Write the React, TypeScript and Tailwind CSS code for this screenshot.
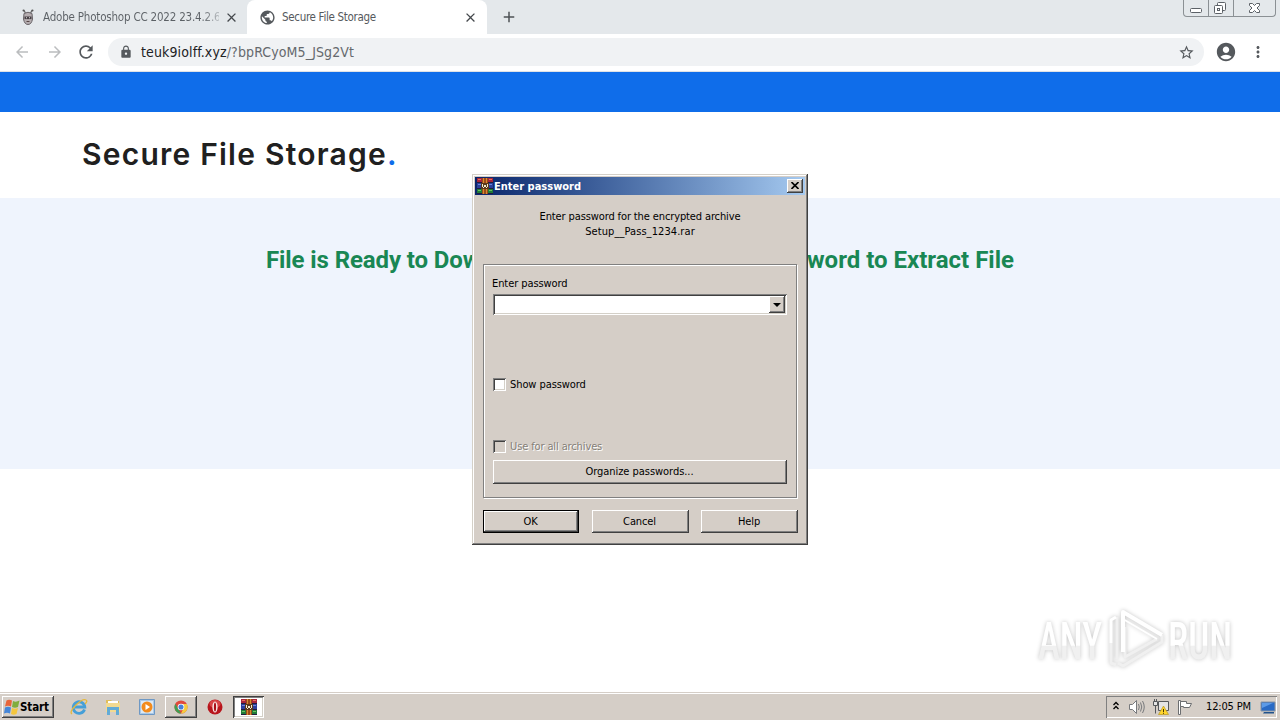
import React from "react";
import {
  MdAccountCircle,
  MdAdd,
  MdArrowBack,
  MdArrowForward,
  MdClose,
  MdLock,
  MdMoreVert,
  MdPublic,
  MdRefresh,
  MdStarBorder,
} from "react-icons/md";

interface ClassicButtonProps {
  label: string;
  className: string;
  isDefault?: boolean;
}

const ClassicButton: React.FC<ClassicButtonProps> = ({ label, className, isDefault }) => {
  return (
    <button
      className={`flex items-center justify-center pt-px pr-px ${className} ${
        isDefault
          ? "border border-black shadow-[inset_-1px_-1px_#404040,inset_1px_1px_#fff,inset_-2px_-2px_#808080]"
          : "shadow-[inset_-1px_-1px_#404040,inset_1px_1px_#fff,inset_-2px_-2px_#808080]"
      }`}
    >
      {label}
    </button>
  );
};

const RarIcon: React.FC<{ className: string }> = ({ className }) => (
  <svg viewBox="0 0 16 16" className={className} shapeRendering="crispEdges">
    <path d="M0 0h16v5H0z" fill="#a8243a" />
    <path d="M0 5h16v6H0z" fill="#2c3f9a" />
    <path d="M0 11h16v5H0z" fill="#1f7a38" />
    <path d="M1 1h3v1H1zM12 1h3v1h-3z" fill="#e8705c" />
    <path d="M1 6h3v1H1zM12 6h3v1h-3z" fill="#6a86dc" />
    <path d="M1 12h3v1H1zM12 12h3v1h-3z" fill="#6cc35e" />
    <path d="M0 4h16v1H0zM0 10h16v1H0zM0 15h16v1H0z" fill="#221c3c" />
    <path d="M5 0h6v16H5z" fill="#9a4a18" />
    <path d="M6 0h1v16H6zM9 0h1v16H9z" fill="#d88a30" />
    <path d="M4 5h8v6H4z" fill="#5a3a1c" />
    <path d="M5 6h1v3H5zM10 6h1v3h-1zM6 9h1v1H6zM9 9h1v1H9zM7 7h2v2H7z" fill="#f3ead0" />
  </svg>
);

const ChromeTabs = () => (
  <div className="flex h-[34px] bg-[#e4e8eb]">
    <div className="flex w-[247px] items-center pl-5">
      <svg viewBox="0 0 16 16" className="h-4 w-4">
        <path d="M4 1.5 5.5 4M12 1.5 10.5 4" stroke="#666" strokeWidth="1.3" />
        <circle cx="3.6" cy="1.5" r="1.1" fill="#555" />
        <circle cx="12.4" cy="1.5" r="1.1" fill="#555" />
        <path d="M4 4.5Q8 2 12 4.5L12.5 10Q11.5 15.5 8 15.5T3.5 10z" fill="#b5adb0" stroke="#686367" />
        <path d="M4.5 7.5h7v2.6h-7z" fill="#463f44" />
        <path d="M6 8.3h1v1H6zM9 8.3h1v1H9z" fill="#ddd" />
        <path d="M6.5 12.5h3" stroke="#544" />
      </svg>
      <span className="ml-[7px] w-[176px] bg-linear-to-r from-[#5b6065] from-[90%] to-[#e4e8eb] to-[104%] bg-clip-text pt-[2px] text-[11.5px] tracking-[-0.2px] whitespace-nowrap text-transparent">
        Adobe Photoshop CC 2022 23.4.2.6
      </span>
      <MdClose className="ml-[5px] h-[15px] w-[15px] text-[#44484c]" />
    </div>
    <div className="flex w-[240px] items-center rounded-t-lg bg-white pl-3">
      <MdPublic className="h-[17px] w-[17px] text-[#55595d]" />
      <span className="ml-[6px] w-[170px] pt-[2px] text-[11.5px] tracking-[-0.32px] whitespace-nowrap text-[#55595d]">
        Secure File Storage
      </span>
      <MdClose className="ml-[11px] h-[15px] w-[15px] text-[#44484c]" />
    </div>
    <div className="flex items-center pl-[13px]">
      <MdAdd className="h-[18px] w-[18px] text-[#4d5155]" />
    </div>
    {/* Window controls */}
    <div className="mr-[4px] ml-auto flex h-[17px] w-[93px] rounded-b border border-t-0 border-[#8b9094]">
      <svg viewBox="0 0 91 16" className="h-4 w-[91px]" fill="none" stroke="#5c6167">
        <path d="M24.5 0v16M49.5 0v16" stroke="#8b9094" />
        <rect x="6.500" y="8.500" width="11" height="4" rx="1" fill="#fff" />
        <rect x="33.500" y="2.500" width="8" height="8" rx="1" fill="#fff" />
        <rect x="30.500" y="5.500" width="8" height="8" rx="1" fill="#fff" />
        <rect x="33.500" y="8.500" width="2" height="2" />
        <path
          d="M65.500 3.500h3l2 2 2-2h3v2l-2.500 2.500 2.500 2.500v2h-3l-2-2-2 2h-3v-2l2.500-2.500-2.500-2.500z"
          fill="#fff"
        />
      </svg>
    </div>
  </div>
);

const ChromeToolbar = () => (
  <div className="flex h-[38px] items-center border-b border-[#dfe2e6] bg-white pb-px text-[#55595d]">
    <MdArrowBack className="ml-[13px] h-[18px] w-[18px] text-[#bbbdbf]" />
    <MdArrowForward className="ml-[15px] h-[18px] w-[18px] text-[#bbbdbf]" />
    <MdRefresh className="ml-[12px] h-5 w-5" />
    <div className="ml-[12px] flex h-7 w-[1096px] items-center rounded-full bg-[#f0f2f4]">
      <MdLock className="ml-[11px] h-[14px] w-[14px]" />
      <span className="ml-[8px] text-[14px] tracking-[0.12px] text-[#65696d]">
        <span className="text-[#202124]">teuk9iolff.xyz</span>/?bpRCyoM5_JSg2Vt
      </span>
      <MdStarBorder className="mr-[9px] ml-auto h-[17px] w-[17px]" />
    </div>
    <MdAccountCircle className="ml-[11px] h-[22px] w-[22px]" />
    <MdMoreVert className="ml-[12px] h-[18px] w-[18px]" />
  </div>
);

const PasswordDialog = () => (
  <div className="absolute top-[174px] left-[472px] flex h-[371px] w-[336px] flex-col bg-[#d5cec7] p-[3px] text-[11px] tracking-[-0.12px] text-black shadow-[inset_-1px_-1px_#404040,inset_1px_1px_#d4d0c8,inset_-2px_-2px_#808080,inset_2px_2px_#fff]">
    <div className="flex h-[18px] items-center bg-linear-to-r from-[#0a246a] to-[#a6caf0] pr-[2px] pl-[2px]">
      <RarIcon className="h-4 w-4" />
      <span className="ml-px pt-[2px] text-[11px] font-bold tracking-[0px] text-white">Enter password</span>
      <button className="ml-auto flex h-[14px] w-4 items-center justify-center bg-[#d5cec7] shadow-[inset_-1px_-1px_#404040,inset_1px_1px_#fff,inset_-2px_-2px_#808080]">
        <svg viewBox="0 0 8 7" className="mb-px h-[7px] w-2" stroke="#000" strokeWidth="1.6">
          <path d="M.5 0l7 7M7.500 0l-7 7" />
        </svg>
      </button>
    </div>
    <div className="mt-[14px] text-center leading-[15px]">
      <p>Enter password for the encrypted archive</p>
      <p className="tracking-[0.08px]">Setup__Pass_1234.rar</p>
    </div>
    <div className="mx-[8px] mt-[25px] flex h-[234px] w-[314px] flex-col border border-[#808080] pr-[9px] pl-[8px] shadow-[inset_1px_1px_#fff,1px_1px_#fff]">
      <label className="mt-[11px] h-[15px] leading-[15px] tracking-[-0.08px]">Enter password</label>
      <div className="mt-[3px] ml-px flex h-[21px] w-[294px] justify-end bg-white p-[2px] shadow-[inset_1px_1px_#808080,inset_-1px_-1px_#fff,inset_2px_2px_#404040,inset_-2px_-2px_#d4d0c8]">
        <div className="flex w-4 items-center justify-center bg-[#d5cec7] shadow-[inset_-1px_-1px_#404040,inset_1px_1px_#fff,inset_-2px_-2px_#808080]">
          <svg viewBox="0 0 8 4" className="h-1 w-2">
            <path d="M0 0h8L4 4z" />
          </svg>
        </div>
      </div>
      <div className="mt-[62px] ml-px flex h-[14px] items-center">
        <span className="h-[13px] w-[13px] bg-white shadow-[inset_1px_1px_#808080,inset_-1px_-1px_#fff,inset_2px_2px_#404040,inset_-2px_-2px_#d4d0c8]" />
        <span className="ml-[4px] pt-[3px] tracking-[-0.08px]">Show password</span>
      </div>
      <div className="mt-[48px] ml-px flex h-[14px] items-center">
        <span className="h-[13px] w-[13px] shadow-[inset_1px_1px_#808080,inset_-1px_-1px_#fff,inset_2px_2px_#404040]" />
        <span className="ml-[4px] pt-[3px] text-[#858078] [text-shadow:1px_1px_#fff]">Use for all archives</span>
      </div>
      <ClassicButton label="Organize passwords..." className="mt-[7px] ml-px h-6 w-[294px] tracking-[-0.04px]" />
    </div>
    <div className="mt-[12px] flex justify-between pr-[7px] pl-[8px]">
      <ClassicButton label="OK" className="h-[23px] w-[96px]" isDefault />
      <ClassicButton label="Cancel" className="h-[23px] w-[97px]" />
      <ClassicButton label="Help" className="h-[23px] w-[97px]" />
    </div>
  </div>
);

const Watermark = () => (
  <svg
    viewBox="0 0 210 70"
    className="absolute top-[605px] left-[1030px] h-[70px] w-[210px] overflow-visible drop-shadow-[0_0_2px_#c4c4c4]"
  >
    <defs>
      <linearGradient id="fade" x1="0" y1="0" x2="0" y2="1">
        <stop offset="0.56" stopColor="#fff" />
        <stop offset="0.58" stopColor="#f0f0f0" />
      </linearGradient>
    </defs>
    <g fill="url(#fade)" fontFamily="Roboto, sans-serif" fontWeight="500" fontSize="52">
      <text x="8" y="54" textLength="64" lengthAdjust="spacingAndGlyphs">ANY</text>
      <text x="138" y="54" textLength="64" lengthAdjust="spacingAndGlyphs">RUN</text>
    </g>
    <g fill="none" strokeWidth="4" strokeLinejoin="round">
      <path d="M132 30v7L93 61l-5-3M95 22v30l32-18" stroke="#f0f0f0" strokeWidth="3" />
      <path d="M93 47V7l39 23" stroke="#fff" />
      <path d="M93 14l34 20" stroke="#fff" strokeWidth="2" />
      <path d="M81 38v20l5 2M87 12v42" stroke="#f0f0f0" strokeWidth="3" />
      <path d="M86 12l-5 3v23" stroke="#fff" strokeWidth="3" />
    </g>
  </svg>
);

const Taskbar = () => (
  <div className="mt-auto flex h-[28px] items-center border-t border-[#d5cec7] bg-[#d5cec7] pr-[3px] pl-[2px] shadow-[inset_0_1px_#fff]">
    <button className="flex h-[22px] w-[52px] items-center pl-[2px] text-[11.5px] font-bold tracking-[-0.1px] shadow-[inset_-1px_-1px_#404040,inset_1px_1px_#fff,inset_-2px_-2px_#808080]">
      <svg viewBox="0 0 16 16" className="h-4 w-4 shrink-0">
        <path d="M2.500 1.500Q5 0 8 1.500L7 7.500Q4 6 1 7.500z" fill="#e8653a" />
        <path d="M9 2Q12 3.500 15.500 1.500L14 8Q11 9.500 8 8z" fill="#80ad3d" />
        <path d="M1 8.500Q4 7 7 8.500L6 14.500Q3 13 0 14.500z" fill="#4586d8" />
        <path d="M8 9Q11 10.500 14 9L12.500 15Q9.500 16.500 7 15z" fill="#f4c63d" />
      </svg>
      <span className="pt-[2px]">Start</span>
    </button>
    <div className="ml-[10px] flex h-[22px] w-[30px] items-center justify-center">
      <svg viewBox="0 0 18 18" className="h-[18px] w-[18px]" fill="none">
        <path d="M14.500 11.500A5.800 5.800 0 1 1 14.800 9H5" stroke="#459fd8" strokeWidth="2.800" />
        <path d="M2 16Q-1 14 6 7T16 2Q18 3 15 6" stroke="#e5b83c" strokeWidth="1.300" />
      </svg>
    </div>
    <div className="ml-[4px] flex h-[22px] w-[30px] items-center justify-center">
      <svg viewBox="0 0 16 16" className="h-4 w-4">
        <path d="M1 1h5l1 1h7v10H1z" fill="#e0be5c" />
        <path d="M3 2h10v3H3z" fill="#fff" />
        <path d="M1 4h14v9H1z" fill="#f3da90" />
        <path d="M2 16V8h12v8h-3v-5H5v5z" fill="#63abd6" />
      </svg>
    </div>
    <div className="ml-[4px] flex h-[22px] w-[30px] items-center justify-center">
      <svg viewBox="0 0 16 16" className="h-4 w-4">
        <path d="M.5.5h15v15H.5z" fill="#a9c9e8" stroke="#6e98c4" />
        <path d="M2 2h12v12H2z" fill="#dce9f5" />
        <circle cx="8" cy="8" r="5.500" fill="#f28b1d" />
        <path d="M6.500 5v6l4.500-3z" fill="#fff" />
      </svg>
    </div>
    <div className="ml-[3px] flex h-[22px] w-8 items-center justify-center shadow-[inset_-1px_-1px_#404040,inset_1px_1px_#fff,inset_-2px_-2px_#808080]">
      <svg viewBox="0 0 16 16" className="h-[14px] w-[14px]">
        <circle cx="8" cy="8" r="7.500" fill="#e04a3c" />
        <path d="M1.500 4.300 6 12 8 15.500A7.500 7.500 0 0 1 1.500 4.300z" fill="#3f9e52" />
        <path d="M8 15.500 11.500 8 9 4.500h5.700A7.500 7.500 0 0 1 8 15.500z" fill="#f5cc3e" />
        <circle cx="8" cy="8" r="3.800" fill="#fff" />
        <circle cx="8" cy="8" r="2.900" fill="#477fd8" />
      </svg>
    </div>
    <div className="flex h-[22px] w-[35px] items-center justify-center">
      <svg viewBox="0 0 16 16" className="h-4 w-4">
        <circle cx="8" cy="8" r="7.500" fill="#b8151c" />
        <ellipse cx="8" cy="5" rx="5.500" ry="4" fill="#d84446" />
        <ellipse cx="8" cy="8" rx="2.600" ry="5.600" fill="#f8e7e5" />
        <ellipse cx="8" cy="8" rx="1.100" ry="4.600" fill="#a90d15" />
      </svg>
    </div>
    <div className="ml-px flex h-[22px] w-[31px] items-center justify-center bg-white shadow-[inset_1px_1px_#404040,inset_-1px_-1px_#fff,inset_2px_2px_#808080,inset_-2px_-2px_#d4d0c8]">
      <RarIcon className="h-4 w-4" />
    </div>
    {/* Notification area */}
    <div className="ml-auto flex h-[22px] w-[171px] items-center pl-[6px] shadow-[inset_1px_1px_#808080,inset_-1px_-1px_#fff]">
      <svg viewBox="0 0 8 10" className="mb-[2px] h-[10px] w-2" fill="none" stroke="#000" strokeWidth="1.300">
        <path d="M1.500 4 4 1.500 6.500 4M1.500 8 4 5.500 6.500 8" />
      </svg>
      <svg viewBox="0 0 16 16" className="ml-[9px] h-4 w-4" fill="#fff" stroke="#77797c">
        <path d="M.5 5.500h3l4-4v13l-4-4h-3z" />
        <path d="M9.500 5Q11 8 9.500 11M11.500 3.500Q14 8 11.500 12.500M13.500 2Q17 8 13.500 14" fill="none" />
      </svg>
      <svg viewBox="0 0 16 16" className="ml-[8px] h-4 w-4" fill="#e4e4e4" stroke="#55585b">
        <path d="M5.500 2.500h10v9h-10z" />
        <path d="M7.500 14.500h6M.5 2.500h4v4h-4zM1.500 0v2M3.500 0v2M2.500 6.500v8" />
        <path d="M10.500 7l5 8.500h-10z" fill="#ffd52b" stroke="#b89824" strokeWidth=".7" />
        <path d="M10.500 10v3M10.500 13.800v1" stroke="#443300" />
      </svg>
      <svg viewBox="0 0 16 16" className="ml-[8px] h-4 w-4" fill="#fff" stroke="#6c6e70">
        <path d="M1.500 1.500h2v14h-2z" />
        <path d="M3.500 2.500h6v2h5l-2 4h-6v-1h-3z" />
      </svg>
      <span className="ml-[13px] w-[47px] pt-[2px] text-[11px] tracking-[-0.15px] whitespace-nowrap">12:05 PM</span>
      <svg viewBox="0 0 16 14" className="ml-[7px] h-[14px] w-4">
        <path d="M1 2h14v9H1z" fill="#286ac5" stroke="#8795a5" />
        <path d="M2 3h11L2 8z" fill="#5b9ae7" />
        <path d="M4 12h10v1.500H3z" fill="#21528b" />
      </svg>
    </div>
  </div>
);

const App = () => {
  return (
    <div className="relative flex h-[720px] w-[1280px] flex-col overflow-hidden bg-white font-['DejaVu_Sans_Condensed','DejaVu_Sans',sans-serif] [font-stretch:condensed]">
      <ChromeTabs />
      <ChromeToolbar />
      <div className="h-10 bg-[#0f6dea]" />
      <header className="flex h-[86px] items-center pl-[82px]">
        <h1 className="pb-px font-[Inter,sans-serif] text-[30px] font-semibold tracking-[1.22px] whitespace-nowrap text-[#202020] [font-stretch:normal]">
          Secure File Storage<span className="text-[#0f6dea]">.</span>
        </h1>
      </header>
      <section className="h-[271px] bg-[#eff4fd] pt-[44px]">
        <h2 className="mx-auto flex w-[748px] justify-between font-[Roboto,sans-serif] text-[24px] leading-[36px] font-bold text-[#198754] [font-stretch:normal]">
          <span className="tracking-[-0.1px]">File is Ready to Download</span>
          <span>Password to Extract File</span>
        </h2>
      </section>
      <Watermark />
      <PasswordDialog />
      <Taskbar />
    </div>
  );
};

export default App;
